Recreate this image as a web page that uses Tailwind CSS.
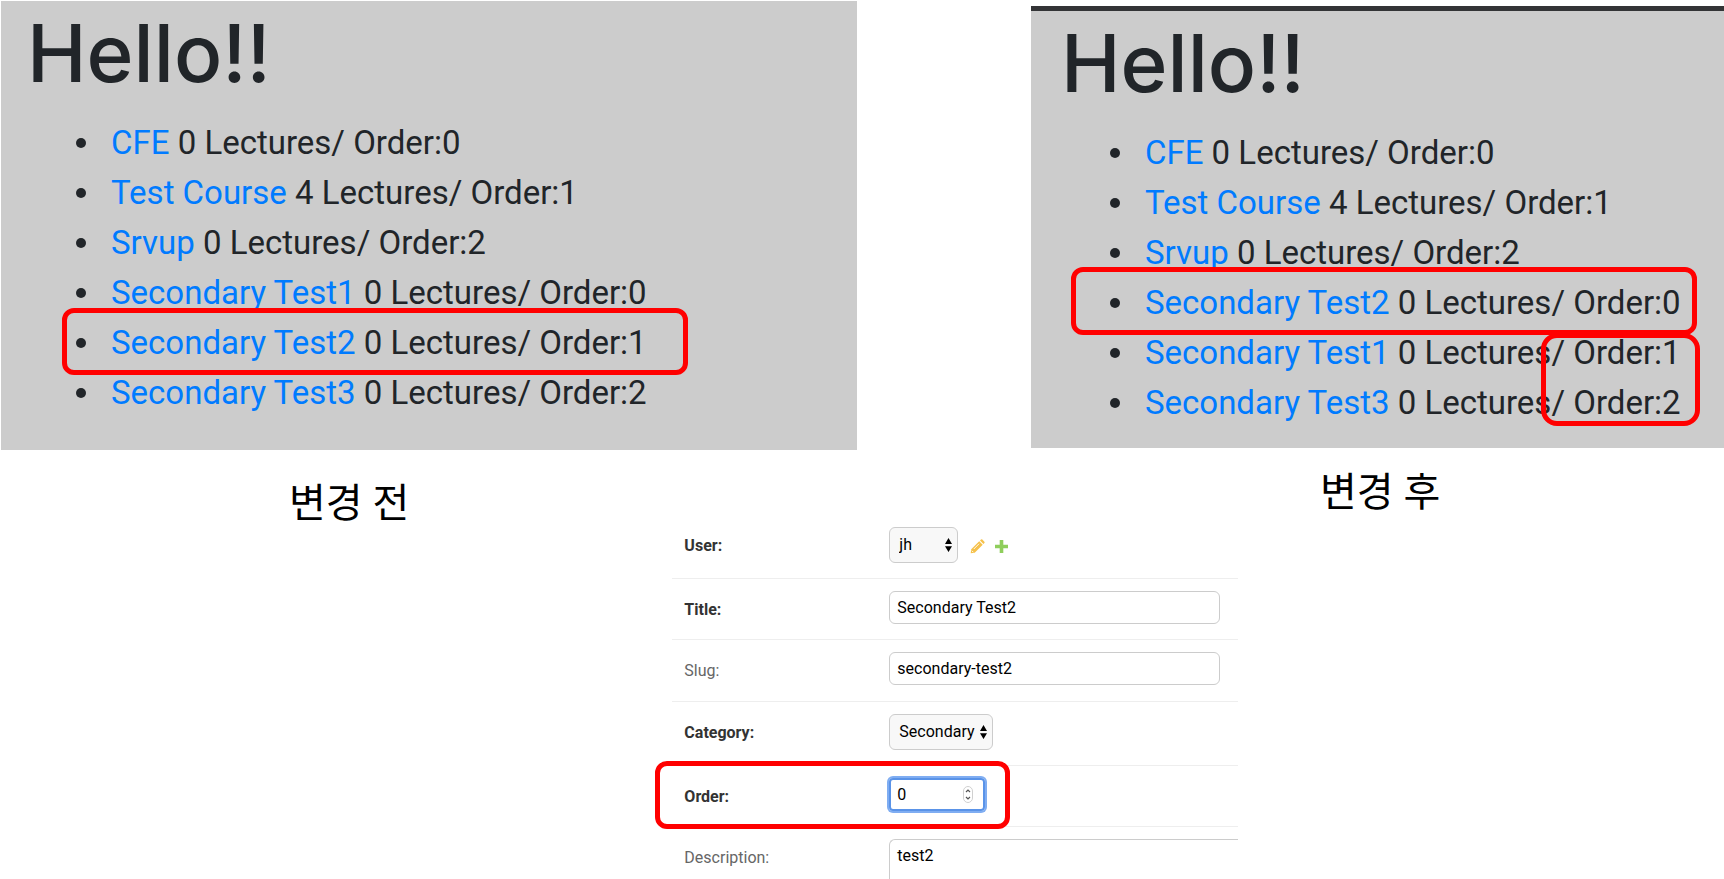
<!DOCTYPE html>
<html lang="ko">
<head>
  <meta charset="UTF-8">
  <meta name="viewport" content="width=device-width, initial-scale=1.0">
  <title>Course order</title>
  <script src="https://cdn.jsdelivr.net/npm/@tailwindcss/browser@4"></script>
</head>
<body class="bg-white h-screen overflow-hidden font-['Roboto','Noto_Sans_CJK_KR',sans-serif]">

  <!-- Before / after lists -->
  <main>
    <div class="flex justify-between items-start h-[515px]">

      <figure class="w-[49.7%] pt-px pl-px">
        <section class="bg-[#cccccc] text-[#212529] pt-3 pb-8 pl-[26px]">
          <h1 class="[font-family:Inter,sans-serif] font-medium text-[80px] leading-[80px]">Hello!!</h1>
          <ul class="mt-[25px] pl-[49px] text-[33px] leading-[50px] whitespace-nowrap">
            <li class="flex items-center gap-[25px] before:size-[10px] before:rounded-full before:bg-[#212529]"><span><a href="#" class="text-[#007bff]">CFE</a> 0 Lectures/ Order:0</span></li>
            <li class="flex items-center gap-[25px] before:size-[10px] before:rounded-full before:bg-[#212529]"><span><a href="#" class="text-[#007bff]">Test Course</a> 4 Lectures/ Order:1</span></li>
            <li class="flex items-center gap-[25px] before:size-[10px] before:rounded-full before:bg-[#212529]"><span><a href="#" class="text-[#007bff]">Srvup</a> 0 Lectures/ Order:2</span></li>
            <li class="flex items-center gap-[25px] before:size-[10px] before:rounded-full before:bg-[#212529]"><span><a href="#" class="text-[#007bff]">Secondary Test1</a> 0 Lectures/ Order:0</span></li>
            <li class="relative flex items-center gap-[25px] before:size-[10px] before:rounded-full before:bg-[#212529]">
              <span><a href="#" class="text-[#007bff]">Secondary Test2</a> 0 Lectures/ Order:1</span>
              <div class="absolute -left-[14px] -top-[10px] w-[626px] h-[67px] border-5 border-[#ff0000] rounded-xl pointer-events-none"></div>
            </li>
            <li class="flex items-center gap-[25px] before:size-[10px] before:rounded-full before:bg-[#212529]"><span><a href="#" class="text-[#007bff]">Secondary Test3</a> 0 Lectures/ Order:2</span></li>
          </ul>
        </section>
        <figcaption class="mt-[26px] pl-[288px] text-[40px] leading-[56px] text-black">변경 전</figcaption>
      </figure>

      <figure class="w-[40.2%] pt-[6px]">
        <section class="bg-[#cccccc] text-[#212529] border-t-5 border-[#333436] pt-3 pb-5 pl-[30px]">
          <h1 class="[font-family:Inter,sans-serif] font-medium text-[80px] leading-[80px]">Hello!!</h1>
          <ul class="mt-[25px] pl-[49px] text-[33px] leading-[50px] whitespace-nowrap">
            <li class="flex items-center gap-[25px] before:size-[10px] before:rounded-full before:bg-[#212529]"><span><a href="#" class="text-[#007bff]">CFE</a> 0 Lectures/ Order:0</span></li>
            <li class="flex items-center gap-[25px] before:size-[10px] before:rounded-full before:bg-[#212529]"><span><a href="#" class="text-[#007bff]">Test Course</a> 4 Lectures/ Order:1</span></li>
            <li class="flex items-center gap-[25px] before:size-[10px] before:rounded-full before:bg-[#212529]"><span><a href="#" class="text-[#007bff]">Srvup</a> 0 Lectures/ Order:2</span></li>
            <li class="relative flex items-center gap-[25px] before:size-[10px] before:rounded-full before:bg-[#212529]">
              <span><a href="#" class="text-[#007bff]">Secondary Test2</a> 0 Lectures/ Order:0</span>
              <div class="absolute -left-[39px] -top-[11px] w-[626px] h-[68px] border-5 border-[#ff0000] rounded-xl pointer-events-none"></div>
            </li>
            <li class="relative flex items-center gap-[25px] before:size-[10px] before:rounded-full before:bg-[#212529]">
              <span><a href="#" class="text-[#007bff]">Secondary Test1</a> 0 Lectures/ Order:1</span>
              <div class="absolute left-[431px] top-[5px] w-[159px] h-[93px] border-5 border-[#ff0000] rounded-2xl pointer-events-none"></div>
            </li>
            <li class="flex items-center gap-[25px] before:size-[10px] before:rounded-full before:bg-[#212529]"><span><a href="#" class="text-[#007bff]">Secondary Test3</a> 0 Lectures/ Order:2</span></li>
          </ul>
        </section>
        <figcaption class="mt-[17px] pl-[289px] text-[40px] leading-[56px] text-black">변경 후</figcaption>
      </figure>
    </div>

    <!-- Admin form -->
    <form class="ml-[39%] w-[566px] text-[16px] text-black">
      <div class="grid grid-cols-[205px_1fr] pl-3 pt-3 pb-[15px] border-b border-[#eeeeee]">
        <label for="user" class="pt-[9px] leading-5 font-bold text-[#333333]">User:</label>
        <div class="flex items-center">
          <div class="relative">
            <select id="user" class="appearance-none w-[69px] h-9 pl-[9px] pb-px bg-[#f8f8f8] border border-[#cccccc] rounded-md">
              <option>jh</option>
            </select>
            <svg class="absolute right-[6px] top-[11px] w-[7px] h-[14px] pointer-events-none" viewBox="0 0 7 14"><path d="M3.500 0L7 6H0zM0 8.200H7L3.500 14z" fill="#000"/></svg>
          </div>
          <a href="#" aria-label="Change user" class="ml-3 mt-[3px]">
            <svg class="size-[15px]" viewBox="0 0 15 15"><path d="M1.200 10.300L9.200 2.300L12.700 5.800L4.700 13.800L.7 14.300zM10 1.500L11 .6Q11.600 0 12.300 .6L14.400 2.700Q15 3.400 14.400 4L13.500 5z" fill="#f5c14b"/><path d="M1.800 11.700L3.300 13.200M3.800 10L9 4.800" stroke="#fff" stroke-width=".9" fill="none"/></svg>
          </a>
          <a href="#" aria-label="Add user" class="ml-[10px] mt-[3px]">
            <svg class="size-[13px]" viewBox="0 0 13 13"><path d="M4.700 0H8.300V4.700H13V8.300H8.300V13H4.700V8.300H0V4.700H4.700z" fill="#8fce5c"/></svg>
          </a>
        </div>
      </div>

      <div class="grid grid-cols-[205px_1fr] pl-3 pt-3 pb-[15px] border-b border-[#eeeeee]">
        <label for="title" class="pt-[9px] leading-5 font-bold text-[#333333]">Title:</label>
        <input type="text" id="title" value="Secondary Test2" class="w-[331px] h-[33px] px-[7px] pb-px border border-[#cccccc] rounded-md">
      </div>

      <div class="grid grid-cols-[205px_1fr] pl-3 pt-3 pb-4 border-b border-[#eeeeee]">
        <label for="slug" class="pt-[9px] leading-5 text-[#666666]">Slug:</label>
        <input type="text" id="slug" value="secondary-test2" class="w-[331px] h-[33px] px-[7px] pb-px border border-[#cccccc] rounded-md">
      </div>

      <div class="grid grid-cols-[205px_1fr] pl-3 pt-3 pb-[15px] border-b border-[#eeeeee]">
        <label for="category" class="pt-[9px] leading-5 font-bold text-[#333333]">Category:</label>
        <div class="relative w-[104px]">
          <select id="category" class="block appearance-none w-full h-9 pl-[9px] pb-px bg-[#f8f8f8] border border-[#cccccc] rounded-md">
            <option>Secondary</option>
          </select>
          <svg class="absolute right-[6px] top-[11px] w-[7px] h-[14px] pointer-events-none" viewBox="0 0 7 14"><path d="M3.500 0L7 6H0zM0 8.200H7L3.500 14z" fill="#000"/></svg>
        </div>
      </div>

      <div class="relative grid grid-cols-[205px_1fr] pl-3 pt-3 pb-[15px] border-b border-[#eeeeee]">
        <label for="order" class="pt-[9px] leading-5 font-bold text-[#333333]">Order:</label>
        <div class="relative w-[96px]">
          <input type="number" id="order" value="0" class="block w-full h-[33px] pl-[6px] pb-px border-2 border-[#5a93e8] rounded-sm outline-none ring-2 ring-[#7fadf2] [appearance:textfield]">
          <svg class="absolute right-3 top-2 w-[10px] h-[17px] pointer-events-none" viewBox="0 0 10 17"><rect x=".5" y=".5" width="9" height="16" rx="4.500" fill="#fff" stroke="#d0d0d0"/><path d="M3 6L5 4L7 6M3 11L5 13L7 11" fill="none" stroke="#555" stroke-width="1.200"/></svg>
        </div>
        <div class="absolute -left-[17px] -top-[5px] w-[355px] h-[68px] border-5 border-[#ff0000] rounded-xl pointer-events-none"></div>
      </div>

      <div class="grid grid-cols-[205px_1fr] pl-3 pt-3">
        <label for="description" class="pt-[9px] leading-5 text-[#666666]">Description:</label>
        <textarea id="description" class="h-20 px-[7px] pt-1 border border-r-0 border-[#cccccc] rounded-tl-md resize-none">test2</textarea>
      </div>
    </form>
  </main>
</body>
</html>
